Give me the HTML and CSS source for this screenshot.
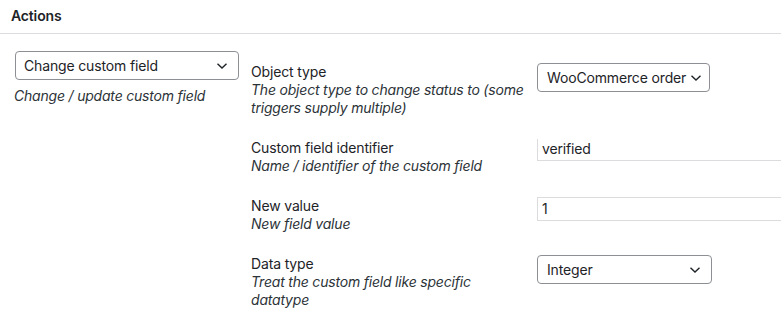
FILE: index.html
```html
<!DOCTYPE html>
<html lang="en">
<head>
<meta charset="utf-8">
<title>Actions</title>
<link rel="stylesheet" href="styles.css">
</head>
<body>
<div class="panel">
  <div class="panel-header">Actions</div>
  <div class="panel-body">
    <div class="action-col">
      <div class="select select-action">
        <span class="select-text">Change custom field</span>
        <svg class="chev" width="12" height="8" viewBox="0 0 12 8"><path d="M1.5 1.8 L6 6 L10.5 1.8" fill="none" stroke="#1d2327" stroke-width="1.4"/></svg>
      </div>
      <p class="desc action-desc">Change / update custom field</p>
    </div>
    <div class="fields">
      <div class="field-row">
        <div class="field-label">
          <div class="label">Object type</div>
          <div class="desc">The object type to change status to (some triggers supply multiple)</div>
        </div>
        <div class="field-input">
          <div class="select select-auto">
            <span class="select-text">WooCommerce order</span>
            <svg class="chev" width="12" height="8" viewBox="0 0 12 8"><path d="M1.5 1.8 L6 6 L10.5 1.8" fill="none" stroke="#1d2327" stroke-width="1.4"/></svg>
          </div>
        </div>
      </div>
      <div class="field-row">
        <div class="field-label">
          <div class="label">Custom field identifier</div>
          <div class="desc">Name / identifier of the custom field</div>
        </div>
        <div class="field-input">
          <div class="text-input input-shift">verified</div>
        </div>
      </div>
      <div class="field-row">
        <div class="field-label">
          <div class="label">New value</div>
          <div class="desc">New field value</div>
        </div>
        <div class="field-input">
          <div class="text-input">1</div>
        </div>
      </div>
      <div class="field-row">
        <div class="field-label">
          <div class="label">Data type</div>
          <div class="desc">Treat the custom field like specific datatype</div>
        </div>
        <div class="field-input">
          <div class="select select-type">
            <span class="select-text">Integer</span>
            <svg class="chev" width="12" height="8" viewBox="0 0 12 8"><path d="M1.5 1.8 L6 6 L10.5 1.8" fill="none" stroke="#1d2327" stroke-width="1.4"/></svg>
          </div>
        </div>
      </div>
    </div>
  </div>
</div>
</body>
</html>
```

FILE: styles.css
```css
html, body {
  margin: 0;
  padding: 0;
  background: #ffffff;
}
body {
  font-family: Inter, "Noto Sans", "Liberation Sans", sans-serif;
  font-size: 14px;
  line-height: 18px;
  letter-spacing: -0.15px;
  color: #1d2327;
  overflow: hidden;
  width: 781px;
  height: 326px;
}
.panel-header {
  font-weight: 600;
  padding: 7px 11px 8px;
  border-bottom: 1px solid #dcdcde;
}
.panel-body {
  display: flex;
  padding: 17px 0 0 15px;
}
.action-col {
  width: 224px;
  flex: none;
}
.select {
  box-sizing: border-box;
  height: 29px;
  border: 1px solid #8c8f94;
  border-radius: 4px;
  display: flex;
  align-items: center;
  padding: 0 10px 0 8px;
  background: #fff;
}
.select-text {
  flex: 1;
  white-space: nowrap;
}
.chev {
  flex: none;
  margin-left: 6px;
}
.select-action {
  width: 224px;
}
.select-auto {
  display: inline-flex;
  padding: 0 7px 0 9px;
}
.select-auto .chev {
  margin-left: 4px;
}
.select-type {
  width: 175px;
  padding-left: 9px;
}
.desc {
  font-style: italic;
  letter-spacing: -0.2px;
  color: #2c3338;
  margin: 0;
}
.action-desc {
  margin-top: 7px;
  margin-left: -1px;
}
.fields {
  flex: 1;
  min-width: 0;
  margin-left: 12px;
  margin-top: 12px;
  display: flex;
  flex-direction: column;
  gap: 22px;
}
.field-row {
  display: flex;
  align-items: flex-start;
}
.field-label {
  width: 279px;
  flex: none;
}
.field-input {
  margin-left: 7px;
  flex: 1;
  min-width: 0;
  overflow: hidden;
}
.text-input {
  box-sizing: border-box;
  height: 24px;
  width: 300px;
  border: 1px solid #dcdcde;
  padding: 2px 4px;
  line-height: 18px;
}
.input-shift {
  margin-top: -2px;
}
```
